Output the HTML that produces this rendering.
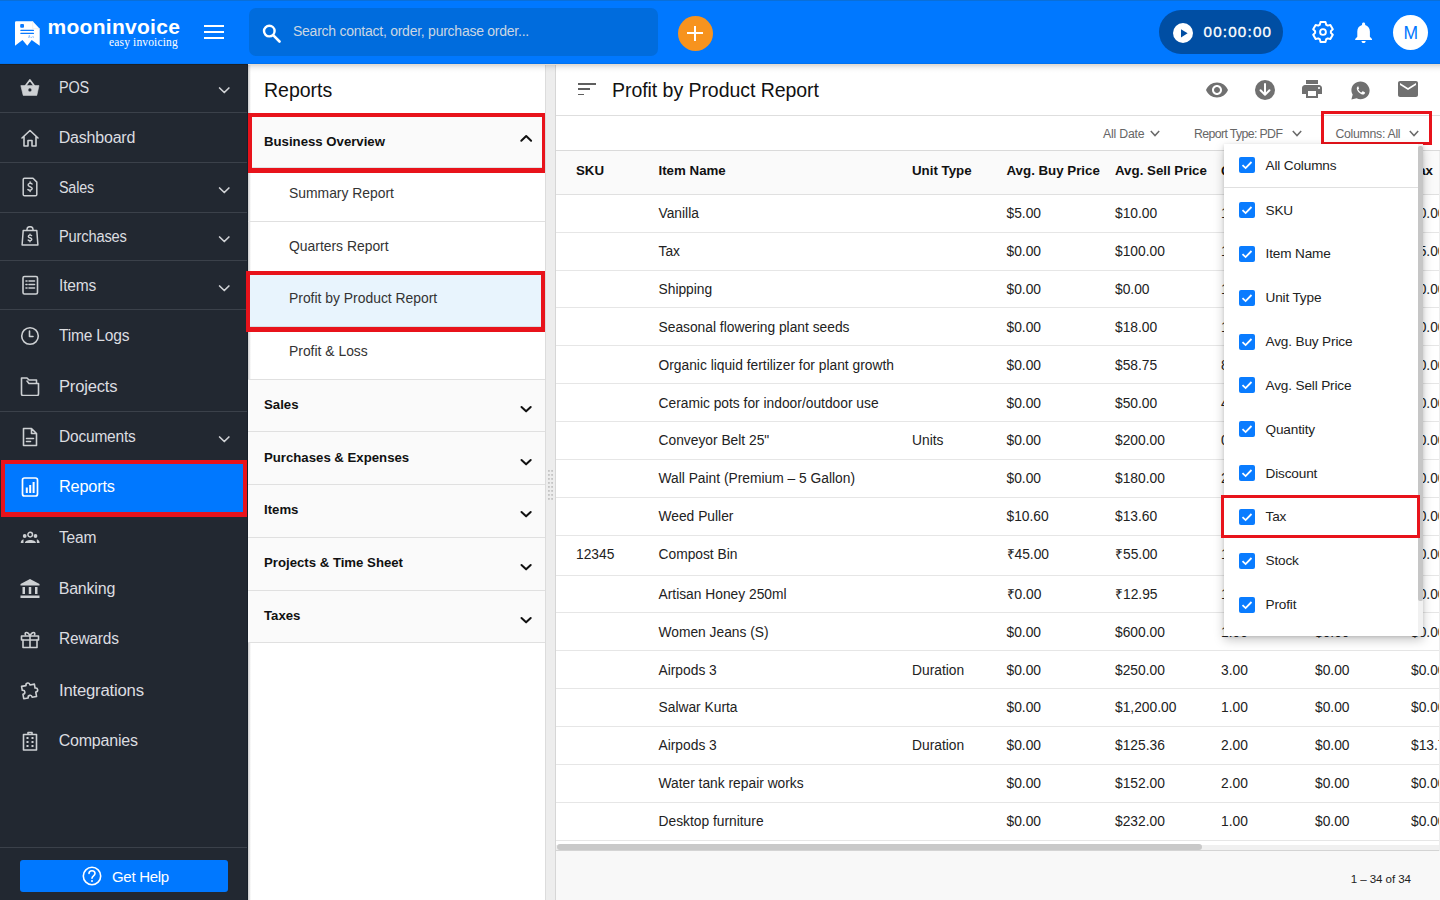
<!DOCTYPE html>
<html><head><meta charset="utf-8">
<style>
*{box-sizing:border-box;margin:0;padding:0}
html,body{width:1440px;height:900px;overflow:hidden;background:#fff;font-family:"Liberation Sans",sans-serif;position:relative}
.a{position:absolute}
.t{position:absolute;white-space:nowrap;line-height:1}
#hdr{left:0;top:0;width:1440px;height:64px;background:#0078ff}
#side{left:0;top:64px;width:248px;height:836px;background:#222831}
.sl{color:#dcdde0;font-size:16px;left:58.7px;letter-spacing:-0.2px}
.sd{left:0;width:248px;height:1px;background:#3b414a}
.chev{position:absolute;width:8px;height:8px;border-right:2px solid #d8d9db;border-bottom:2px solid #d8d9db;transform:rotate(45deg)}
#rp{left:248px;top:64px;width:297px;height:836px;background:#fff}
#gap{left:545px;top:64px;width:11px;height:836px;background:#ededed;border-left:1px solid #dcdcdc;border-right:1px solid #d6d6d6}
#main{left:556px;top:64px;width:884px;height:836px;background:#fff}
</style></head><body>
<!-- HEADER -->
<div id="hdr" class="a"></div>
<div class="a" style="left:0;top:0;width:1440px;height:1px;background:#0a6fd8"></div>
<div class="a" style="left:0;top:62.5px;width:1440px;height:1.5px;background:#0072f0"></div>
<svg class="a" style="left:15px;top:21px" width="25" height="25" viewBox="0 0 25 25">
 <path d="M0 1.4 Q0 0.2 1.2 0.2 H17.7 L24.7 7.7 V24.7 L16.7 19 L12.3 24.7 L7.5 19 L0 24.7 Z" fill="#fff"/>
 <path d="M17.7 0.2 V7.7 H24.7" fill="none" stroke="#ece9e4" stroke-width="0.7"/>
 <rect x="5.2" y="3" width="3.8" height="3.7" rx="0.9" fill="#0a7aff"/>
 <rect x="5.3" y="8.8" width="13.7" height="1.3" rx="0.6" fill="#0a7aff"/>
 <rect x="5.3" y="11.8" width="13.7" height="1.3" rx="0.6" fill="#0a7aff"/>
 <path d="M13.5 17 L14.3 14.3 L15.1 17 M16 16.2 Q17 17.2 17.8 15.4 M18.3 15.4 L18.6 16.8" stroke="#5aa2ff" stroke-width="0.6" fill="none"/>
</svg>
<div class="t" style="left:47.5px;top:16.3px;font-size:21px;font-weight:700;color:#fff;letter-spacing:0.28px">mooninvoice</div>
<div class="t" style="left:109px;top:36.5px;font-size:11.5px;color:#fff;font-family:'Liberation Serif',serif;letter-spacing:0.15px">easy invoicing</div>
<div class="a" style="left:204px;top:25px;width:20px;height:2px;background:#fff"></div>
<div class="a" style="left:204px;top:31px;width:20px;height:2px;background:#fff"></div>
<div class="a" style="left:204px;top:37px;width:20px;height:2px;background:#fff"></div>
<div class="a" style="left:249px;top:8px;width:409px;height:48px;background:#006cdd;border-radius:7px"></div>
<svg class="a" style="left:261.5px;top:23.6px" width="19" height="19" viewBox="0 0 19 19"><circle cx="7.3" cy="7.1" r="5.3" fill="none" stroke="#fff" stroke-width="2.4"/><path d="M11.4 11.4 L17.5 17.5" stroke="#fff" stroke-width="2.6" stroke-linecap="round"/></svg>
<div class="t" style="left:293px;top:24.2px;font-size:14px;color:#cad6e3;letter-spacing:-0.25px">Search contact, order, purchase order...</div>
<div class="a" style="left:678px;top:16px;width:35px;height:35px;border-radius:50%;background:#f7931e"></div>
<div class="a" style="left:687px;top:32.3px;width:15.6px;height:2.1px;background:#fff"></div>
<div class="a" style="left:693.8px;top:25.5px;width:2.1px;height:15.6px;background:#fff"></div>
<div class="a" style="left:1159px;top:10px;width:124px;height:44px;border-radius:22px;background:#004ea3"></div>
<div class="a" style="left:1172.5px;top:22.5px;width:20.5px;height:20.5px;border-radius:50%;background:#fff"></div>
<svg class="a" style="left:1172.5px;top:22.5px" width="21" height="21" viewBox="0 0 21 21"><path d="M8 6.2 L14.6 10.3 L8 14.4 Z" fill="#004ea3"/></svg>
<div class="t" style="left:1203.5px;top:24.3px;font-size:15.2px;color:#fff;letter-spacing:1.2px;-webkit-text-stroke:0.35px #fff">00:00:00</div>
<svg class="a" style="left:1311.2px;top:19.8px" width="24" height="24" viewBox="0 0 24 24"><path d="M8.79 4.78 L9.53 2.10 L14.47 2.10 L15.21 4.78 A7.9 7.9 0 0 1 16.64 5.61 L19.34 4.91 L21.80 9.19 L19.86 11.17 A7.9 7.9 0 0 1 19.86 12.83 L21.80 14.81 L19.34 19.09 L16.64 18.39 A7.9 7.9 0 0 1 15.21 19.22 L14.47 21.90 L9.53 21.90 L8.79 19.22 A7.9 7.9 0 0 1 7.36 18.39 L4.66 19.09 L2.20 14.81 L4.14 12.83 A7.9 7.9 0 0 1 4.14 11.17 L2.20 9.19 L4.66 4.91 L7.36 5.61 A7.9 7.9 0 0 1 8.79 4.78 Z" fill="none" stroke="#fff" stroke-width="2" stroke-linejoin="round"/><circle cx="12" cy="12" r="2.9" fill="none" stroke="#fff" stroke-width="1.9"/></svg>
<svg class="a" style="left:1351px;top:20px" width="25.2" height="25.2" viewBox="0 0 24 24"><path fill="#fff" d="M12 22c1.1 0 2-.9 2-2h-4c0 1.1.89 2 2 2zm6-6v-5c0-3.07-1.64-5.640-4.5-6.32V4c0-.83-.67-1.5-1.5-1.5s-1.5.67-1.5 1.5v.68C7.63 5.36 6 7.92 6 11v5l-2 2v1h16v-1l-2-2z"/></svg>
<div class="t" style="left:1393px;top:15px;width:35px;height:35px;border-radius:50%;background:#fff"></div>
<div class="t" style="left:1403.5px;top:25.3px;font-size:17.5px;color:#0078ff">M</div>

<!-- SIDEBAR -->
<div id="side" class="a"></div>
<div class="a" style="left:0;top:64px;width:248px;height:1px;background:#1b2025"></div>
<svg class="a" style="left:20px;top:79px" width="20" height="20" viewBox="0 0 20 20"><path d="M0.8 6.6 H19 L16.8 16.4 H3.2 Z" fill="#cdd0d3" stroke="#cdd0d3" stroke-width="0.6" stroke-linejoin="round"/><path d="M5.6 6.8 L9.9 0.9 L14.2 6.8" stroke="#cdd0d3" stroke-width="1.7" fill="none" stroke-linecap="round" stroke-linejoin="round"/><circle cx="9.9" cy="10.9" r="1.6" fill="#222831"/></svg>
<div class="t sl" style="top:80.0px;transform:scaleX(0.903);transform-origin:0 0">POS</div>
<svg class="a" style="left:216px;top:85.3px" width="16" height="11"><path d="M3.6 3 L8.3 7.5 L12.9 3" stroke="#d0d2d5" stroke-width="1.7" fill="none" stroke-linecap="round" stroke-linejoin="round"/></svg>
<svg class="a" style="left:20px;top:128px" width="20" height="20" viewBox="0 0 20 20"><path d="M2 10 L10 2.5 L18 10 M4 8.5 V18 H8 V12.5 H12 V18 H16 V8.5" stroke="#cdd0d3" stroke-width="1.6" fill="none" stroke-linecap="round" stroke-linejoin="round"/></svg>
<div class="t sl" style="top:130.0px">Dashboard</div>
<svg class="a" style="left:20px;top:177px" width="20" height="20" viewBox="0 0 20 20"><path d="M4.5 1.3 H13 L16.8 5.1 V17.5 Q16.8 18.8 15.5 18.8 H4.5 Q3.2 18.8 3.2 17.5 V2.6 Q3.2 1.3 4.5 1.3 Z" stroke="#cdd0d3" stroke-width="1.5" fill="none" stroke-linejoin="round"/><path d="M12 7 C11.5 6.1 8.1 5.9 8.1 8 C8.1 10 12.2 9.4 12.2 11.6 C12.2 13.6 8.7 13.5 7.9 12.5 M10.1 5.1 V6 M10.1 13.4 V14.5" stroke="#cdd0d3" stroke-width="1.5" fill="none" stroke-linecap="round"/></svg>
<div class="t sl" style="top:180.0px;transform:scaleX(0.895);transform-origin:0 0">Sales</div>
<svg class="a" style="left:216px;top:185.3px" width="16" height="11"><path d="M3.6 3 L8.3 7.5 L12.9 3" stroke="#d0d2d5" stroke-width="1.7" fill="none" stroke-linecap="round" stroke-linejoin="round"/></svg>
<svg class="a" style="left:20px;top:226px" width="20" height="20" viewBox="0 0 20 20"><path d="M3.2 4.6 H16.8 L17.9 19 H2.1 Z M7 4.6 V3.2 C7 -0.2 13 -0.2 13 3.2 V4.6" stroke="#cdd0d3" stroke-width="1.5" fill="none" stroke-linejoin="round"/><path d="M11.6 9.6 C11.2 8.9 8.3 8.7 8.3 10.4 C8.3 12 11.8 11.5 11.8 13.3 C11.8 15 8.8 14.8 8.2 14 M10 8.2 V9 M10 14.8 V15.7" stroke="#cdd0d3" stroke-width="1.4" fill="none" stroke-linecap="round"/></svg>
<div class="t sl" style="top:229.0px;transform:scaleX(0.918);transform-origin:0 0">Purchases</div>
<svg class="a" style="left:216px;top:234.3px" width="16" height="11"><path d="M3.6 3 L8.3 7.5 L12.9 3" stroke="#d0d2d5" stroke-width="1.7" fill="none" stroke-linecap="round" stroke-linejoin="round"/></svg>
<svg class="a" style="left:20px;top:275px" width="20" height="20" viewBox="0 0 20 20"><rect x="3" y="1.5" width="14.5" height="17.5" rx="1.5" stroke="#cdd0d3" stroke-width="1.6" fill="none" stroke-linecap="round" stroke-linejoin="round"/><path d="M6 6 H7 M9 6 H14.5 M6 9.5 H7 M9 9.5 H14.5 M6 13 H7 M9 13 H14.5" stroke="#cdd0d3" stroke-width="1.6" fill="none" stroke-linecap="round" stroke-linejoin="round"/></svg>
<div class="t sl" style="top:278.0px;transform:scaleX(0.973);transform-origin:0 0">Items</div>
<svg class="a" style="left:216px;top:283.3px" width="16" height="11"><path d="M3.6 3 L8.3 7.5 L12.9 3" stroke="#d0d2d5" stroke-width="1.7" fill="none" stroke-linecap="round" stroke-linejoin="round"/></svg>
<svg class="a" style="left:20px;top:326px" width="20" height="20" viewBox="0 0 20 20"><circle cx="10" cy="10" r="8.3" stroke="#cdd0d3" stroke-width="1.6" fill="none" stroke-linecap="round" stroke-linejoin="round"/><path d="M9.5 5 V10.5 H13" stroke="#cdd0d3" stroke-width="1.6" fill="none" stroke-linecap="round" stroke-linejoin="round"/></svg>
<div class="t sl" style="top:328.0px;transform:scaleX(0.972);transform-origin:0 0">Time Logs</div>
<svg class="a" style="left:20px;top:376px" width="20" height="20" viewBox="0 0 20 20"><path d="M1.5 5 V18 C1.5 19 2 19.5 3 19.5 H17 C18 19.5 18.5 19 18.5 18 V7.5 H9 L7 5 M1.5 5 V2 H7 L9 4 H16.5 V7.5" stroke="#cdd0d3" stroke-width="1.6" fill="none" stroke-linecap="round" stroke-linejoin="round"/></svg>
<div class="t sl" style="top:379.0px;transform:scaleX(1.036);transform-origin:0 0">Projects</div>
<svg class="a" style="left:20px;top:427px" width="20" height="20" viewBox="0 0 20 20"><path d="M3.5 1.5 H11.5 L16.5 6.5 V18.5 H3.5 Z M11.5 1.5 V6.5 H16.5 M6.5 11.5 H13.5 M6.5 14.5 H10.5" stroke="#cdd0d3" stroke-width="1.6" fill="none" stroke-linecap="round" stroke-linejoin="round"/></svg>
<div class="t sl" style="top:429.0px;transform:scaleX(0.968);transform-origin:0 0">Documents</div>
<svg class="a" style="left:216px;top:434.3px" width="16" height="11"><path d="M3.6 3 L8.3 7.5 L12.9 3" stroke="#d0d2d5" stroke-width="1.7" fill="none" stroke-linecap="round" stroke-linejoin="round"/></svg>
<svg class="a" style="left:20px;top:530px" width="20" height="14" viewBox="0 0 20 14"><circle cx="10.2" cy="4.6" r="2.3" stroke="#cdd0d3" stroke-width="1.5" fill="none"/><circle cx="4.7" cy="6" r="1.9" fill="#cdd0d3"/><circle cx="15.5" cy="6" r="1.9" fill="#cdd0d3"/><path d="M4.9 13 C4.9 8.9 15.9 8.9 15.9 13 Z" fill="#cdd0d3"/><path d="M0.7 13 C0.7 11 2 9.5 3.5 9.3 V13 Z" fill="#cdd0d3"/><path d="M19.6 13 C19.6 11 18.3 9.5 16.8 9.3 V13 Z" fill="#cdd0d3"/></svg>
<div class="t sl" style="top:530.0px;transform:scaleX(0.974);transform-origin:0 0">Team</div>
<svg class="a" style="left:20px;top:578px" width="20" height="20" viewBox="0 0 20 20"><path d="M10 1 L19.5 6 V7.5 H0.5 V6 Z" fill="#cdd0d3"/><rect x="2.5" y="9" width="2.5" height="7" fill="#cdd0d3"/><rect x="8.75" y="9" width="2.5" height="7" fill="#cdd0d3"/><rect x="15" y="9" width="2.5" height="7" fill="#cdd0d3"/><rect x="0.5" y="17.5" width="19" height="3" fill="#cdd0d3"/></svg>
<div class="t sl" style="top:581.0px">Banking</div>
<svg class="a" style="left:20px;top:630px" width="20" height="20" viewBox="0 0 20 20"><rect x="1.5" y="6" width="17" height="4" stroke="#cdd0d3" stroke-width="1.6" fill="none" stroke-linecap="round" stroke-linejoin="round"/><path d="M3 10 V17.5 H17 V10 M10 6 V17.5 M10 6 C8 1 4 2 5.5 5 M10 6 C12 1 16 2 14.5 5" stroke="#cdd0d3" stroke-width="1.6" fill="none" stroke-linecap="round" stroke-linejoin="round"/></svg>
<div class="t sl" style="top:631.0px;transform:scaleX(0.967);transform-origin:0 0">Rewards</div>
<svg class="a" style="left:20px;top:681px" width="20" height="20" viewBox="0 0 20 20"><path d="M7 4 C7 1 11 1 11 4 H15.5 V8 C18.5 8 18.5 12 15.5 12 V16.5 H11 C11 13.5 7 13.5 7 16.5 H2.5 V12 C5.5 12 5.5 8 2.5 8 V4 Z" stroke="#cdd0d3" stroke-width="1.6" fill="none" stroke-linecap="round" stroke-linejoin="round" transform="rotate(-10 10 10)"/></svg>
<div class="t sl" style="top:683.0px;transform:scaleX(1.044);transform-origin:0 0">Integrations</div>
<svg class="a" style="left:20px;top:731px" width="20" height="20" viewBox="0 0 20 20"><path d="M3.5 3.5 H16.5 V19 H3.5 Z M8 3.5 V1.5 H12 V3.5" stroke="#cdd0d3" stroke-width="1.6" fill="none" stroke-linecap="round" stroke-linejoin="round"/><g fill="#cdd0d3"><rect x="6.5" y="6" width="2" height="2"/><rect x="11.5" y="6" width="2" height="2"/><rect x="6.5" y="10" width="2" height="2"/><rect x="11.5" y="10" width="2" height="2"/><rect x="6.5" y="14" width="2" height="2"/><rect x="11.5" y="14" width="2" height="2"/></g></svg>
<div class="t sl" style="top:733.0px">Companies</div>
<div class="a sd" style="top:112px"></div>
<div class="a sd" style="top:162px"></div>
<div class="a sd" style="top:212px"></div>
<div class="a sd" style="top:260px"></div>
<div class="a sd" style="top:309px"></div>
<div class="a sd" style="top:411px"></div>
<div class="a" style="left:1px;top:460px;width:247px;height:57px;background:#e8131b"></div>
<div class="a" style="left:5px;top:464px;width:238px;height:48px;background:#0078ff"></div>
<svg class="a" style="left:21px;top:477px" width="18" height="20" viewBox="0 0 18 20"><rect x="1.5" y="1" width="15" height="18" rx="2" stroke="#fff" stroke-width="1.7" fill="none"/><rect x="4.8" y="10.5" width="2" height="5.5" fill="#fff"/><rect x="8.2" y="8" width="2" height="8" fill="#fff"/><rect x="11.6" y="5" width="2" height="11" fill="#fff"/></svg>
<div class="t sl" style="top:479.0px;color:#fff;transform:scaleX(1.019);transform-origin:0 0">Reports</div>
<div class="a sd" style="top:847px"></div>
<div class="a" style="left:20px;top:860px;width:208px;height:32px;background:#0078ff;border-radius:3px"></div>
<svg class="a" style="left:82px;top:866px" width="20" height="20" viewBox="0 0 20 20"><circle cx="10" cy="10" r="8.7" stroke="#fff" stroke-width="1.6" fill="none"/><path d="M7 7.5 C7 3.8 13 3.8 13 7.5 C13 9.8 10 9.8 10 12.3" stroke="#fff" stroke-width="1.6" fill="none" stroke-linecap="round"/><circle cx="10" cy="15" r="1" fill="#fff"/></svg>
<div class="t" style="left:112px;top:869px;font-size:15px;color:#fff;letter-spacing:-0.3px">Get Help</div>

<!-- REPORTS PANEL -->
<div id="rp" class="a"></div>
<div class="a" style="left:247px;top:64px;width:1px;height:836px;background:#18202a"></div>
<div class="a" style="left:248px;top:64px;width:3px;height:836px;background:linear-gradient(90deg,rgba(0,0,0,0.2),rgba(0,0,0,0))"></div>
<div class="t" style="left:264px;top:80.5px;font-size:19.5px;color:#111">Reports</div>
<div class="a" style="left:248px;top:113.3px;width:298px;height:59.3px;background:#e8131b"></div>
<div class="a" style="left:252px;top:117px;width:290px;height:51px;background:#fafafa;border-bottom:1px solid #dfe3e6"></div>
<div class="t" style="left:264px;top:134.5px;font-size:13.2px;font-weight:700;color:#111">Business Overview</div>
<svg class="a" style="left:517px;top:131px" width="20" height="14"><path d="M4.3 9.7 L9.2 5 L14.1 9.7" stroke="#111" stroke-width="2" fill="none" stroke-linecap="round" stroke-linejoin="round"/></svg>
<div class="a" style="left:248px;top:220.5px;width:297px;height:1px;background:#e0e0e0"></div>
<div class="a" style="left:248px;top:273px;width:297px;height:1px;background:#e0e0e0"></div>
<div class="a" style="left:246px;top:270.7px;width:299px;height:61px;background:#e8131b"></div>
<div class="a" style="left:250px;top:275px;width:291px;height:52px;background:#e8f4fd;border-bottom:1px solid #d6dde3"></div>
<div class="t" style="left:289px;top:186.7px;font-size:13.9px;color:#333">Summary Report</div>
<div class="t" style="left:289px;top:239.7px;font-size:13.9px;color:#333">Quarters Report</div>
<div class="t" style="left:289px;top:291.5px;font-size:13.9px;color:#333">Profit by Product Report</div>
<div class="t" style="left:289px;top:344.9px;font-size:13.9px;color:#333">Profit &amp; Loss</div>
<div class="a" style="left:248px;top:378.5px;width:297px;height:52.75px;background:#fafafa;border-top:1px solid #e0e0e0"></div>
<div class="t" style="left:264px;top:397.8px;font-size:13.2px;font-weight:700;color:#111">Sales</div>
<svg class="a" style="left:517px;top:403.90px" width="20" height="12"><path d="M4.5 3 L9.1 7.35 L13.7 3" stroke="#111" stroke-width="2" fill="none" stroke-linecap="round" stroke-linejoin="round"/></svg>
<div class="a" style="left:248px;top:431.25px;width:297px;height:52.75px;background:#fafafa;border-top:1px solid #e0e0e0"></div>
<div class="t" style="left:264px;top:450.55px;font-size:13.2px;font-weight:700;color:#111">Purchases &amp; Expenses</div>
<svg class="a" style="left:517px;top:456.65px" width="20" height="12"><path d="M4.5 3 L9.1 7.35 L13.7 3" stroke="#111" stroke-width="2" fill="none" stroke-linecap="round" stroke-linejoin="round"/></svg>
<div class="a" style="left:248px;top:484.0px;width:297px;height:52.75px;background:#fafafa;border-top:1px solid #e0e0e0"></div>
<div class="t" style="left:264px;top:503.3px;font-size:13.2px;font-weight:700;color:#111">Items</div>
<svg class="a" style="left:517px;top:509.40px" width="20" height="12"><path d="M4.5 3 L9.1 7.35 L13.7 3" stroke="#111" stroke-width="2" fill="none" stroke-linecap="round" stroke-linejoin="round"/></svg>
<div class="a" style="left:248px;top:536.75px;width:297px;height:52.75px;background:#fafafa;border-top:1px solid #e0e0e0"></div>
<div class="t" style="left:264px;top:556.05px;font-size:13.2px;font-weight:700;color:#111">Projects &amp; Time Sheet</div>
<svg class="a" style="left:517px;top:562.15px" width="20" height="12"><path d="M4.5 3 L9.1 7.35 L13.7 3" stroke="#111" stroke-width="2" fill="none" stroke-linecap="round" stroke-linejoin="round"/></svg>
<div class="a" style="left:248px;top:589.5px;width:297px;height:52.75px;background:#fafafa;border-top:1px solid #e0e0e0"></div>
<div class="t" style="left:264px;top:608.8px;font-size:13.2px;font-weight:700;color:#111">Taxes</div>
<svg class="a" style="left:517px;top:614.90px" width="20" height="12"><path d="M4.5 3 L9.1 7.35 L13.7 3" stroke="#111" stroke-width="2" fill="none" stroke-linecap="round" stroke-linejoin="round"/></svg>
<div class="a" style="left:248px;top:642px;width:297px;height:1px;background:#e0e0e0"></div>
<div id="gap" class="a"></div>

<svg class="a" style="left:548.1px;top:470.3px" width="6" height="32"><rect x="0" y="0" width="1.8" height="1.8" fill="#c4c4c4"/><rect x="0" y="4" width="1.8" height="1.8" fill="#c4c4c4"/><rect x="0" y="8" width="1.8" height="1.8" fill="#c4c4c4"/><rect x="0" y="12" width="1.8" height="1.8" fill="#c4c4c4"/><rect x="0" y="16" width="1.8" height="1.8" fill="#c4c4c4"/><rect x="0" y="20" width="1.8" height="1.8" fill="#c4c4c4"/><rect x="0" y="24" width="1.8" height="1.8" fill="#c4c4c4"/><rect x="0" y="28" width="1.8" height="1.8" fill="#c4c4c4"/><rect x="3.2" y="0" width="1.8" height="1.8" fill="#c4c4c4"/><rect x="3.2" y="4" width="1.8" height="1.8" fill="#c4c4c4"/><rect x="3.2" y="8" width="1.8" height="1.8" fill="#c4c4c4"/><rect x="3.2" y="12" width="1.8" height="1.8" fill="#c4c4c4"/><rect x="3.2" y="16" width="1.8" height="1.8" fill="#c4c4c4"/><rect x="3.2" y="20" width="1.8" height="1.8" fill="#c4c4c4"/><rect x="3.2" y="24" width="1.8" height="1.8" fill="#c4c4c4"/><rect x="3.2" y="28" width="1.8" height="1.8" fill="#c4c4c4"/></svg>

<!-- MAIN -->
<div id="main" class="a"></div>
<div class="a" style="left:578px;top:83.4px;width:18px;height:1.5px;background:#5f5f5f"></div>
<div class="a" style="left:578px;top:88.3px;width:12.2px;height:1.5px;background:#5f5f5f"></div>
<div class="a" style="left:578px;top:93.5px;width:5.8px;height:1.5px;background:#5f5f5f"></div>
<div class="t" style="left:612px;top:80.8px;font-size:19.5px;color:#111;letter-spacing:-0.05px">Profit by Product Report</div>
<svg class="a" style="left:1204.5px;top:78px" width="24" height="24" viewBox="0 0 24 24"><path fill="#707070" d="M12 4.5C7 4.5 2.73 7.61 1 12c1.73 4.39 6 7.5 11 7.5s9.27-3.11 11-7.5c-1.73-4.39-6-7.5-11-7.5zM12 17c-2.76 0-5-2.24-5-5s2.24-5 5-5 5 2.24 5 5-2.24 5-5 5zm0-8c-1.66 0-3 1.34-3 3s1.34 3 3 3 3-1.34 3-3-1.34-3-3-3z"/></svg>
<svg class="a" style="left:1254.5px;top:79.5px" width="20" height="20" viewBox="0 0 20 20"><circle cx="10" cy="10" r="10" fill="#707070"/><path d="M10 4 V14.5 M5.5 10.2 L10 14.7 L14.5 10.2" stroke="#fff" stroke-width="2" fill="none" stroke-linecap="round" stroke-linejoin="round"/></svg>
<svg class="a" style="left:1300px;top:77px" width="24" height="24" viewBox="0 0 24 24"><path fill="#707070" d="M19 8H5c-1.66 0-3 1.34-3 3v6h4v4h12v-4h4v-6c0-1.66-1.34-3-3-3zm-3 11H8v-5h8v5zm3-7c-.55 0-1-.45-1-1s.45-1 1-1 1 .45 1 1-.45 1-1 1zm-1-9H6v4h12V3z"/></svg>
<svg class="a" style="left:1350.5px;top:80.5px" width="19" height="19" viewBox="0 0 24 24"><path fill="#707070" d="M12 0.5C5.65 0.5 0.5 5.4 0.5 11.5c0 2.1.6 4.05 1.65 5.7L0.5 23.5l6.6-1.6c1.5.75 3.2 1.15 4.9 1.15 6.35 0 11.5-4.9 11.5-11S18.35 0.5 12 0.5z"/><path fill="#fff" d="M8.3 6.2c.3 0 .6 0 .8.5l1 2.3c.1.3 0 .5-.1.7l-.7.8c-.2.2-.2.4 0 .7.5.9 1.2 1.7 2 2.3.7.5 1.1.7 1.5.9.3.1.5.1.7-.1l.8-1c.2-.3.5-.3.8-.2l2.2 1c.3.2.5.3.5.5 0 .9-.5 1.8-1.2 2.2-.8.4-1.9.5-3.4-.1-2.1-.8-3.6-2.3-4.8-4-.8-1.2-1.2-2.4-1.1-3.4.1-1 .7-1.8 1-2 .2-.2.5-.3.8-.3z"/></svg>
<svg class="a" style="left:1396px;top:77px" width="24" height="24" viewBox="0 0 24 24"><path fill="#707070" d="M20 4H4c-1.1 0-2 .9-2 2v12c0 1.1.9 2 2 2h16c1.1 0 2-.9 2-2V6c0-1.1-.9-2-2-2zm0 4l-8 5-8-5V6l8 5 8-5v2z"/></svg>
<div class="a" style="left:556px;top:114.5px;width:884px;height:1px;background:#dedede"></div>
<div class="t" style="left:1103px;top:127.6px;font-size:12.3px;color:#666;letter-spacing:-0.2px">All Date</div>
<svg class="a" style="left:1149.6px;top:130px" width="10" height="7" viewBox="0 0 10 7"><path d="M0.8 1 L5 5.6 L9.2 1" stroke="#6a6a6a" stroke-width="1.5" fill="none"/></svg>
<div class="t" style="left:1194px;top:127.6px;font-size:12.3px;color:#666;letter-spacing:-0.62px">Report Type: PDF</div>
<svg class="a" style="left:1291.5px;top:130px" width="10" height="7" viewBox="0 0 10 7"><path d="M0.8 1 L5 5.6 L9.2 1" stroke="#6a6a6a" stroke-width="1.5" fill="none"/></svg>
<div class="a" style="left:1321px;top:110.5px;width:111px;height:34px;border:3.5px solid #e8131b"></div>
<div class="t" style="left:1335.5px;top:127.6px;font-size:12.3px;color:#666;letter-spacing:-0.3px">Columns: All</div>
<svg class="a" style="left:1408.7px;top:130px" width="10" height="7" viewBox="0 0 10 7"><path d="M0.8 1 L5 5.6 L9.2 1" stroke="#6a6a6a" stroke-width="1.5" fill="none"/></svg>
<div class="a" style="left:556px;top:150px;width:884px;height:44.5px;background:#fafafa;border-top:1.5px solid #dadada;border-bottom:1px solid #e0e0e0"></div>
<div class="t" style="left:576px;top:164.4px;font-size:13.3px;font-weight:700;color:#111">SKU</div>
<div class="t" style="left:658.5px;top:164.4px;font-size:13.3px;font-weight:700;color:#111">Item Name</div>
<div class="t" style="left:912px;top:164.4px;font-size:13.3px;font-weight:700;color:#111">Unit Type</div>
<div class="t" style="left:1006.5px;top:164.4px;font-size:13.3px;font-weight:700;color:#111">Avg. Buy Price</div>
<div class="t" style="left:1115px;top:164.4px;font-size:13.3px;font-weight:700;color:#111">Avg. Sell Price</div>
<div class="t" style="left:1221px;top:164.4px;font-size:13.3px;font-weight:700;color:#111">Quantity</div>
<div class="t" style="left:1315px;top:164.4px;font-size:13.3px;font-weight:700;color:#111">Discount</div>
<div class="t" style="left:1411px;top:164.4px;font-size:13.3px;font-weight:700;color:#111">Tax</div>
<div class="t" style="left:658.5px;top:207.0px;font-size:13.8px;color:#222">Vanilla</div>
<div class="t" style="left:1006.5px;top:207.0px;font-size:13.8px;color:#222">$5.00</div>
<div class="t" style="left:1115px;top:207.0px;font-size:13.8px;color:#222">$10.00</div>
<div class="t" style="left:1221px;top:207.0px;font-size:13.8px;color:#222">1.00</div>
<div class="t" style="left:1315px;top:207.0px;font-size:13.8px;color:#222">$0.00</div>
<div class="t" style="left:1411px;top:207.0px;font-size:13.8px;color:#222">$0.00</div>
<div class="a" style="left:556px;top:231.6px;width:884px;height:1px;background:#e6e6e6"></div>
<div class="t" style="left:658.5px;top:244.9px;font-size:13.8px;color:#222">Tax</div>
<div class="t" style="left:1006.5px;top:244.9px;font-size:13.8px;color:#222">$0.00</div>
<div class="t" style="left:1115px;top:244.9px;font-size:13.8px;color:#222">$100.00</div>
<div class="t" style="left:1221px;top:244.9px;font-size:13.8px;color:#222">1.00</div>
<div class="t" style="left:1315px;top:244.9px;font-size:13.8px;color:#222">$0.00</div>
<div class="t" style="left:1411px;top:244.9px;font-size:13.8px;color:#222">$5.00</div>
<div class="a" style="left:556px;top:269.5px;width:884px;height:1px;background:#e6e6e6"></div>
<div class="t" style="left:658.5px;top:282.8px;font-size:13.8px;color:#222">Shipping</div>
<div class="t" style="left:1006.5px;top:282.8px;font-size:13.8px;color:#222">$0.00</div>
<div class="t" style="left:1115px;top:282.8px;font-size:13.8px;color:#222">$0.00</div>
<div class="t" style="left:1221px;top:282.8px;font-size:13.8px;color:#222">1.00</div>
<div class="t" style="left:1315px;top:282.8px;font-size:13.8px;color:#222">$0.00</div>
<div class="t" style="left:1411px;top:282.8px;font-size:13.8px;color:#222">$0.00</div>
<div class="a" style="left:556px;top:307.4px;width:884px;height:1px;background:#e6e6e6"></div>
<div class="t" style="left:658.5px;top:320.7px;font-size:13.8px;color:#222">Seasonal flowering plant seeds</div>
<div class="t" style="left:1006.5px;top:320.7px;font-size:13.8px;color:#222">$0.00</div>
<div class="t" style="left:1115px;top:320.7px;font-size:13.8px;color:#222">$18.00</div>
<div class="t" style="left:1221px;top:320.7px;font-size:13.8px;color:#222">1.00</div>
<div class="t" style="left:1315px;top:320.7px;font-size:13.8px;color:#222">$0.00</div>
<div class="t" style="left:1411px;top:320.7px;font-size:13.8px;color:#222">$0.00</div>
<div class="a" style="left:556px;top:345.3px;width:884px;height:1px;background:#e6e6e6"></div>
<div class="t" style="left:658.5px;top:358.6px;font-size:13.8px;color:#222">Organic liquid fertilizer for plant growth</div>
<div class="t" style="left:1006.5px;top:358.6px;font-size:13.8px;color:#222">$0.00</div>
<div class="t" style="left:1115px;top:358.6px;font-size:13.8px;color:#222">$58.75</div>
<div class="t" style="left:1221px;top:358.6px;font-size:13.8px;color:#222">8.00</div>
<div class="t" style="left:1315px;top:358.6px;font-size:13.8px;color:#222">$0.00</div>
<div class="t" style="left:1411px;top:358.6px;font-size:13.8px;color:#222">$0.00</div>
<div class="a" style="left:556px;top:383.2px;width:884px;height:1px;background:#e6e6e6"></div>
<div class="t" style="left:658.5px;top:396.5px;font-size:13.8px;color:#222">Ceramic pots for indoor/outdoor use</div>
<div class="t" style="left:1006.5px;top:396.5px;font-size:13.8px;color:#222">$0.00</div>
<div class="t" style="left:1115px;top:396.5px;font-size:13.8px;color:#222">$50.00</div>
<div class="t" style="left:1221px;top:396.5px;font-size:13.8px;color:#222">4.00</div>
<div class="t" style="left:1315px;top:396.5px;font-size:13.8px;color:#222">$0.00</div>
<div class="t" style="left:1411px;top:396.5px;font-size:13.8px;color:#222">$0.00</div>
<div class="a" style="left:556px;top:421.1px;width:884px;height:1px;background:#e6e6e6"></div>
<div class="t" style="left:658.5px;top:434.4px;font-size:13.8px;color:#222">Conveyor Belt 25&quot;</div>
<div class="t" style="left:912px;top:434.4px;font-size:13.8px;color:#222">Units</div>
<div class="t" style="left:1006.5px;top:434.4px;font-size:13.8px;color:#222">$0.00</div>
<div class="t" style="left:1115px;top:434.4px;font-size:13.8px;color:#222">$200.00</div>
<div class="t" style="left:1221px;top:434.4px;font-size:13.8px;color:#222">0.00</div>
<div class="t" style="left:1315px;top:434.4px;font-size:13.8px;color:#222">$0.00</div>
<div class="t" style="left:1411px;top:434.4px;font-size:13.8px;color:#222">$0.00</div>
<div class="a" style="left:556px;top:459.0px;width:884px;height:1px;background:#e6e6e6"></div>
<div class="t" style="left:658.5px;top:472.3px;font-size:13.8px;color:#222">Wall Paint (Premium – 5 Gallon)</div>
<div class="t" style="left:1006.5px;top:472.3px;font-size:13.8px;color:#222">$0.00</div>
<div class="t" style="left:1115px;top:472.3px;font-size:13.8px;color:#222">$180.00</div>
<div class="t" style="left:1221px;top:472.3px;font-size:13.8px;color:#222">2.00</div>
<div class="t" style="left:1315px;top:472.3px;font-size:13.8px;color:#222">$0.00</div>
<div class="t" style="left:1411px;top:472.3px;font-size:13.8px;color:#222">$0.00</div>
<div class="a" style="left:556px;top:496.9px;width:884px;height:1px;background:#e6e6e6"></div>
<div class="t" style="left:658.5px;top:510.2px;font-size:13.8px;color:#222">Weed Puller</div>
<div class="t" style="left:1006.5px;top:510.2px;font-size:13.8px;color:#222">$10.60</div>
<div class="t" style="left:1115px;top:510.2px;font-size:13.8px;color:#222">$13.60</div>
<div class="t" style="left:1221px;top:510.2px;font-size:13.8px;color:#222">1.00</div>
<div class="t" style="left:1315px;top:510.2px;font-size:13.8px;color:#222">$0.00</div>
<div class="t" style="left:1411px;top:510.2px;font-size:13.8px;color:#222">$0.00</div>
<div class="a" style="left:556px;top:534.8px;width:884px;height:1px;background:#e6e6e6"></div>
<div class="t" style="left:576px;top:548.1px;font-size:13.8px;color:#222">12345</div>
<div class="t" style="left:658.5px;top:548.1px;font-size:13.8px;color:#222">Compost Bin</div>
<div class="t" style="left:1006.5px;top:548.1px;font-size:13.8px;color:#222">₹45.00</div>
<div class="t" style="left:1115px;top:548.1px;font-size:13.8px;color:#222">₹55.00</div>
<div class="t" style="left:1221px;top:548.1px;font-size:13.8px;color:#222">1.00</div>
<div class="t" style="left:1315px;top:548.1px;font-size:13.8px;color:#222">$0.00</div>
<div class="t" style="left:1411px;top:548.1px;font-size:13.8px;color:#222">$0.00</div>
<div class="a" style="left:556px;top:574.5px;width:884px;height:1px;background:#e6e6e6"></div>
<div class="t" style="left:658.5px;top:587.8px;font-size:13.8px;color:#222">Artisan Honey 250ml</div>
<div class="t" style="left:1006.5px;top:587.8px;font-size:13.8px;color:#222">₹0.00</div>
<div class="t" style="left:1115px;top:587.8px;font-size:13.8px;color:#222">₹12.95</div>
<div class="t" style="left:1221px;top:587.8px;font-size:13.8px;color:#222">1.00</div>
<div class="t" style="left:1315px;top:587.8px;font-size:13.8px;color:#222">$0.00</div>
<div class="t" style="left:1411px;top:587.8px;font-size:13.8px;color:#222">$0.00</div>
<div class="a" style="left:556px;top:612.4px;width:884px;height:1px;background:#e6e6e6"></div>
<div class="t" style="left:658.5px;top:625.6px;font-size:13.8px;color:#222">Women Jeans (S)</div>
<div class="t" style="left:1006.5px;top:625.6px;font-size:13.8px;color:#222">$0.00</div>
<div class="t" style="left:1115px;top:625.6px;font-size:13.8px;color:#222">$600.00</div>
<div class="t" style="left:1221px;top:625.6px;font-size:13.8px;color:#222">1.00</div>
<div class="t" style="left:1315px;top:625.6px;font-size:13.8px;color:#222">$0.00</div>
<div class="t" style="left:1411px;top:625.6px;font-size:13.8px;color:#222">$0.00</div>
<div class="a" style="left:556px;top:650.2px;width:884px;height:1px;background:#e6e6e6"></div>
<div class="t" style="left:658.5px;top:663.5px;font-size:13.8px;color:#222">Airpods 3</div>
<div class="t" style="left:912px;top:663.5px;font-size:13.8px;color:#222">Duration</div>
<div class="t" style="left:1006.5px;top:663.5px;font-size:13.8px;color:#222">$0.00</div>
<div class="t" style="left:1115px;top:663.5px;font-size:13.8px;color:#222">$250.00</div>
<div class="t" style="left:1221px;top:663.5px;font-size:13.8px;color:#222">3.00</div>
<div class="t" style="left:1315px;top:663.5px;font-size:13.8px;color:#222">$0.00</div>
<div class="t" style="left:1411px;top:663.5px;font-size:13.8px;color:#222">$0.00</div>
<div class="a" style="left:556px;top:688.0px;width:884px;height:1px;background:#e6e6e6"></div>
<div class="t" style="left:658.5px;top:701.3px;font-size:13.8px;color:#222">Salwar Kurta</div>
<div class="t" style="left:1006.5px;top:701.3px;font-size:13.8px;color:#222">$0.00</div>
<div class="t" style="left:1115px;top:701.3px;font-size:13.8px;color:#222">$1,200.00</div>
<div class="t" style="left:1221px;top:701.3px;font-size:13.8px;color:#222">1.00</div>
<div class="t" style="left:1315px;top:701.3px;font-size:13.8px;color:#222">$0.00</div>
<div class="t" style="left:1411px;top:701.3px;font-size:13.8px;color:#222">$0.00</div>
<div class="a" style="left:556px;top:725.9px;width:884px;height:1px;background:#e6e6e6"></div>
<div class="t" style="left:658.5px;top:739.2px;font-size:13.8px;color:#222">Airpods 3</div>
<div class="t" style="left:912px;top:739.2px;font-size:13.8px;color:#222">Duration</div>
<div class="t" style="left:1006.5px;top:739.2px;font-size:13.8px;color:#222">$0.00</div>
<div class="t" style="left:1115px;top:739.2px;font-size:13.8px;color:#222">$125.36</div>
<div class="t" style="left:1221px;top:739.2px;font-size:13.8px;color:#222">2.00</div>
<div class="t" style="left:1315px;top:739.2px;font-size:13.8px;color:#222">$0.00</div>
<div class="t" style="left:1411px;top:739.2px;font-size:13.8px;color:#222">$13.76</div>
<div class="a" style="left:556px;top:763.8px;width:884px;height:1px;background:#e6e6e6"></div>
<div class="t" style="left:658.5px;top:777.0px;font-size:13.8px;color:#222">Water tank repair works</div>
<div class="t" style="left:1006.5px;top:777.0px;font-size:13.8px;color:#222">$0.00</div>
<div class="t" style="left:1115px;top:777.0px;font-size:13.8px;color:#222">$152.00</div>
<div class="t" style="left:1221px;top:777.0px;font-size:13.8px;color:#222">2.00</div>
<div class="t" style="left:1315px;top:777.0px;font-size:13.8px;color:#222">$0.00</div>
<div class="t" style="left:1411px;top:777.0px;font-size:13.8px;color:#222">$0.00</div>
<div class="a" style="left:556px;top:801.6px;width:884px;height:1px;background:#e6e6e6"></div>
<div class="t" style="left:658.5px;top:814.9px;font-size:13.8px;color:#222">Desktop furniture</div>
<div class="t" style="left:1006.5px;top:814.9px;font-size:13.8px;color:#222">$0.00</div>
<div class="t" style="left:1115px;top:814.9px;font-size:13.8px;color:#222">$232.00</div>
<div class="t" style="left:1221px;top:814.9px;font-size:13.8px;color:#222">1.00</div>
<div class="t" style="left:1315px;top:814.9px;font-size:13.8px;color:#222">$0.00</div>
<div class="t" style="left:1411px;top:814.9px;font-size:13.8px;color:#222">$0.00</div>
<div class="a" style="left:556px;top:839.5px;width:884px;height:1px;background:#e6e6e6"></div>
<div class="a" style="left:556px;top:844.5px;width:884px;height:6px;background:#f0f0f0;border-bottom:1px solid #d4d4d4"></div>
<div class="a" style="left:557px;top:844.2px;width:645px;height:6.3px;background:#c9c9c9;border-radius:3px"></div>
<div class="a" style="left:556px;top:851px;width:884px;height:49px;background:#f8f8f8"></div>
<div class="t" style="left:1350.8px;top:872.8px;font-size:11.6px;color:#222;letter-spacing:-0.1px">1 – 34 of 34</div>
<div class="a" style="left:1438.5px;top:151px;width:1.5px;height:700px;background:#ededed"></div>
<div class="a" style="left:1224px;top:144px;width:198.5px;height:492px;background:#fff;box-shadow:0 4px 10px rgba(0,0,0,0.22), 0 1px 3px rgba(0,0,0,0.12)"></div>
<div class="a" style="left:1418px;top:144px;width:4.5px;height:492px;background:#f1f1f1"></div>
<div class="a" style="left:1418px;top:146px;width:4.5px;height:455px;background:#c6c6c6;border-radius:2px"></div>
<div class="a" style="left:1238.7px;top:157.00px;width:16px;height:16px;background:#0a7cff;border-radius:2px"></div>
<svg class="a" style="left:1238.7px;top:157.00px" width="16" height="16" viewBox="0 0 16 16"><path d="M3.5 8.2 L6.6 11.1 L12.5 5" stroke="#fff" stroke-width="1.8" fill="none"/></svg>
<div class="t" style="left:1265.5px;top:158.50px;font-size:13.6px;color:#222;letter-spacing:-0.15px">All Columns</div>
<div class="a" style="left:1238.7px;top:202.00px;width:16px;height:16px;background:#0a7cff;border-radius:2px"></div>
<svg class="a" style="left:1238.7px;top:202.00px" width="16" height="16" viewBox="0 0 16 16"><path d="M3.5 8.2 L6.6 11.1 L12.5 5" stroke="#fff" stroke-width="1.8" fill="none"/></svg>
<div class="t" style="left:1265.5px;top:203.50px;font-size:13.6px;color:#222;letter-spacing:-0.15px">SKU</div>
<div class="a" style="left:1238.7px;top:245.85px;width:16px;height:16px;background:#0a7cff;border-radius:2px"></div>
<svg class="a" style="left:1238.7px;top:245.85px" width="16" height="16" viewBox="0 0 16 16"><path d="M3.5 8.2 L6.6 11.1 L12.5 5" stroke="#fff" stroke-width="1.8" fill="none"/></svg>
<div class="t" style="left:1265.5px;top:247.35px;font-size:13.6px;color:#222;letter-spacing:-0.15px">Item Name</div>
<div class="a" style="left:1238.7px;top:289.70px;width:16px;height:16px;background:#0a7cff;border-radius:2px"></div>
<svg class="a" style="left:1238.7px;top:289.70px" width="16" height="16" viewBox="0 0 16 16"><path d="M3.5 8.2 L6.6 11.1 L12.5 5" stroke="#fff" stroke-width="1.8" fill="none"/></svg>
<div class="t" style="left:1265.5px;top:291.20px;font-size:13.6px;color:#222;letter-spacing:-0.15px">Unit Type</div>
<div class="a" style="left:1238.7px;top:333.55px;width:16px;height:16px;background:#0a7cff;border-radius:2px"></div>
<svg class="a" style="left:1238.7px;top:333.55px" width="16" height="16" viewBox="0 0 16 16"><path d="M3.5 8.2 L6.6 11.1 L12.5 5" stroke="#fff" stroke-width="1.8" fill="none"/></svg>
<div class="t" style="left:1265.5px;top:335.05px;font-size:13.6px;color:#222;letter-spacing:-0.15px">Avg. Buy Price</div>
<div class="a" style="left:1238.7px;top:377.40px;width:16px;height:16px;background:#0a7cff;border-radius:2px"></div>
<svg class="a" style="left:1238.7px;top:377.40px" width="16" height="16" viewBox="0 0 16 16"><path d="M3.5 8.2 L6.6 11.1 L12.5 5" stroke="#fff" stroke-width="1.8" fill="none"/></svg>
<div class="t" style="left:1265.5px;top:378.90px;font-size:13.6px;color:#222;letter-spacing:-0.15px">Avg. Sell Price</div>
<div class="a" style="left:1238.7px;top:421.25px;width:16px;height:16px;background:#0a7cff;border-radius:2px"></div>
<svg class="a" style="left:1238.7px;top:421.25px" width="16" height="16" viewBox="0 0 16 16"><path d="M3.5 8.2 L6.6 11.1 L12.5 5" stroke="#fff" stroke-width="1.8" fill="none"/></svg>
<div class="t" style="left:1265.5px;top:422.75px;font-size:13.6px;color:#222;letter-spacing:-0.15px">Quantity</div>
<div class="a" style="left:1238.7px;top:465.10px;width:16px;height:16px;background:#0a7cff;border-radius:2px"></div>
<svg class="a" style="left:1238.7px;top:465.10px" width="16" height="16" viewBox="0 0 16 16"><path d="M3.5 8.2 L6.6 11.1 L12.5 5" stroke="#fff" stroke-width="1.8" fill="none"/></svg>
<div class="t" style="left:1265.5px;top:466.60px;font-size:13.6px;color:#222;letter-spacing:-0.15px">Discount</div>
<div class="a" style="left:1238.7px;top:508.95px;width:16px;height:16px;background:#0a7cff;border-radius:2px"></div>
<svg class="a" style="left:1238.7px;top:508.95px" width="16" height="16" viewBox="0 0 16 16"><path d="M3.5 8.2 L6.6 11.1 L12.5 5" stroke="#fff" stroke-width="1.8" fill="none"/></svg>
<div class="t" style="left:1265.5px;top:510.45px;font-size:13.6px;color:#222;letter-spacing:-0.15px">Tax</div>
<div class="a" style="left:1238.7px;top:552.80px;width:16px;height:16px;background:#0a7cff;border-radius:2px"></div>
<svg class="a" style="left:1238.7px;top:552.80px" width="16" height="16" viewBox="0 0 16 16"><path d="M3.5 8.2 L6.6 11.1 L12.5 5" stroke="#fff" stroke-width="1.8" fill="none"/></svg>
<div class="t" style="left:1265.5px;top:554.30px;font-size:13.6px;color:#222;letter-spacing:-0.15px">Stock</div>
<div class="a" style="left:1238.7px;top:596.65px;width:16px;height:16px;background:#0a7cff;border-radius:2px"></div>
<svg class="a" style="left:1238.7px;top:596.65px" width="16" height="16" viewBox="0 0 16 16"><path d="M3.5 8.2 L6.6 11.1 L12.5 5" stroke="#fff" stroke-width="1.8" fill="none"/></svg>
<div class="t" style="left:1265.5px;top:598.15px;font-size:13.6px;color:#222;letter-spacing:-0.15px">Profit</div>
<div class="a" style="left:1224px;top:187px;width:194px;height:1px;background:#e0e0e0"></div>
<div class="a" style="left:1221px;top:495px;width:199px;height:43px;border:3.5px solid #e8131b"></div>
<div class="a" style="left:248px;top:64px;width:1192px;height:9px;background:linear-gradient(#e6dcd0 0,#e6dcd0 1px,rgba(0,0,0,0.14) 1px,rgba(0,0,0,0.1) 2px,rgba(0,0,0,0.05) 4px,rgba(0,0,0,0.02) 6px,rgba(0,0,0,0) 9px)"></div>
</body></html>
